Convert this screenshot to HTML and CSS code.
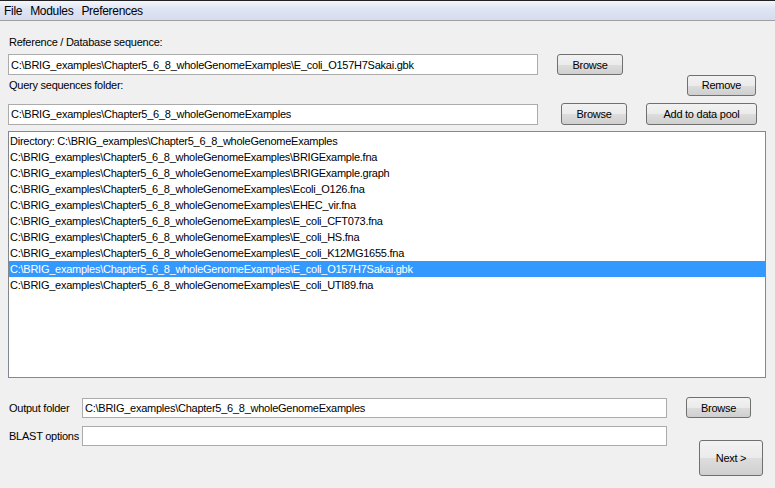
FILE: index.html
```html
<!DOCTYPE html>
<html lang="en">
<head>
  <meta charset="UTF-8" />
  <title>BRIG</title>
  <link rel="stylesheet" href="styles.css">
</head>
<body>

  <!-- Menu -->
  <div class="menubar">
    <span class="menu-item">File</span>
    <span class="menu-item">Modules</span>
    <span class="menu-item">Preferences</span>
  </div>

  <div class="main">
    <div class="label ref-label">Reference / Database sequence:</div>
    <div class="row row-ref">
      <input class="field wide" type="text" value="C:\BRIG_examples\Chapter5_6_8_wholeGenomeExamples\E_coli_O157H7Sakai.gbk">
      <button class="btn browse-ref">Browse</button>
    </div>

    <div class="row row-query-label">
      <div class="label">Query sequences folder:</div>
      <button class="btn remove">Remove</button>
    </div>
    <div class="row row-query">
      <input class="field wide" type="text" value="C:\BRIG_examples\Chapter5_6_8_wholeGenomeExamples">
      <button class="btn browse-query">Browse</button>
      <button class="btn add-pool">Add to data pool</button>
    </div>

    <!-- Data pool -->
    <div class="pool">
      <div class="pool-row">Directory: C:\BRIG_examples\Chapter5_6_8_wholeGenomeExamples</div>
      <div class="pool-row">C:\BRIG_examples\Chapter5_6_8_wholeGenomeExamples\BRIGExample.fna</div>
      <div class="pool-row">C:\BRIG_examples\Chapter5_6_8_wholeGenomeExamples\BRIGExample.graph</div>
      <div class="pool-row">C:\BRIG_examples\Chapter5_6_8_wholeGenomeExamples\Ecoli_O126.fna</div>
      <div class="pool-row">C:\BRIG_examples\Chapter5_6_8_wholeGenomeExamples\EHEC_vir.fna</div>
      <div class="pool-row">C:\BRIG_examples\Chapter5_6_8_wholeGenomeExamples\E_coli_CFT073.fna</div>
      <div class="pool-row">C:\BRIG_examples\Chapter5_6_8_wholeGenomeExamples\E_coli_HS.fna</div>
      <div class="pool-row">C:\BRIG_examples\Chapter5_6_8_wholeGenomeExamples\E_coli_K12MG1655.fna</div>
      <div class="pool-row selected">C:\BRIG_examples\Chapter5_6_8_wholeGenomeExamples\E_coli_O157H7Sakai.gbk</div>
      <div class="pool-row">C:\BRIG_examples\Chapter5_6_8_wholeGenomeExamples\E_coli_UTI89.fna</div>
    </div>

    <div class="bottom">
      <div class="bottom-fields">
        <div class="row row-out">
          <div class="label side-label">Output folder</div>
          <input class="field out" type="text" value="C:\BRIG_examples\Chapter5_6_8_wholeGenomeExamples">
          <button class="btn browse-out">Browse</button>
        </div>
        <div class="row row-blast">
          <div class="label side-label">BLAST options</div>
          <input class="field out" type="text" value="">
        </div>
      </div>
      <button class="btn next">Next &gt;</button>
    </div>
  </div>

</body>
</html>
```

FILE: styles.css
```css
body { margin: 0; background: #f0f0f0; font-family: "Liberation Sans", Arial, sans-serif; font-size: 11px; letter-spacing: -0.25px; color: #000; width: 775px; height: 488px; overflow: hidden; }

.menubar { height: 19px; border-top: 1px solid #222; border-bottom: 1px solid #a0a0a0; background: linear-gradient(#f4f6fb, #dfe5f3 40%, #d6dcef); display: flex; align-items: center; padding-left: 4px; font-size: 12px; letter-spacing: -0.3px; }
.menu-item { margin-right: 8px; }

.main { padding: 0 8px; }
.label { line-height: 14px; white-space: nowrap; }
.ref-label { margin-top: 14px; padding-left: 1px; }

.row { display: flex; align-items: center; }
.row-ref { margin-top: 5px; height: 21px; }
.row-query-label { height: 20px; justify-content: space-between; padding-left: 1px; }
.row-query { margin-top: 8px; }

.field { box-sizing: border-box; height: 21px; border: 1px solid #ababab; background: #fff; font: inherit; letter-spacing: inherit; padding: 0 2px; outline: none; }
.field.wide { width: 530px; }
.field.out { width: 585px; height: 20px; }

.btn { box-sizing: border-box; height: 21px; border: 1px solid #707070; border-radius: 3px; background: linear-gradient(#f2f2f2 0%, #ebebeb 50%, #dddddd 51%, #cfcfcf 100%); font: inherit; letter-spacing: inherit; padding: 0; color: #000; }
.browse-ref { width: 66px; margin-left: 19px; }
.remove { width: 69px; margin-right: 11px; }
.browse-query { width: 66px; height: 22px; margin-left: 23px; }
.add-pool { width: 111px; height: 22px; margin-left: 19px; }

.pool { box-sizing: border-box; margin-top: 6px; width: 758px; height: 247px; border: 1px solid #828790; background: #fff; padding-top: 1px; }
.pool-row { height: 16px; line-height: 16px; padding-left: 1px; white-space: nowrap; }
.pool-row.selected { background: #3399ff; color: #fff; }

.bottom { display: flex; align-items: flex-start; margin-top: 19px; }
.side-label { width: 73px; padding-left: 1px; }
.row-out { height: 21px; }
.row-blast { margin-top: 8px; height: 20px; }
.browse-out { width: 65px; height: 21px; margin-left: 19px; }
.next { width: 64px; height: 36px; margin-left: -52px; margin-top: 43px; }
```
